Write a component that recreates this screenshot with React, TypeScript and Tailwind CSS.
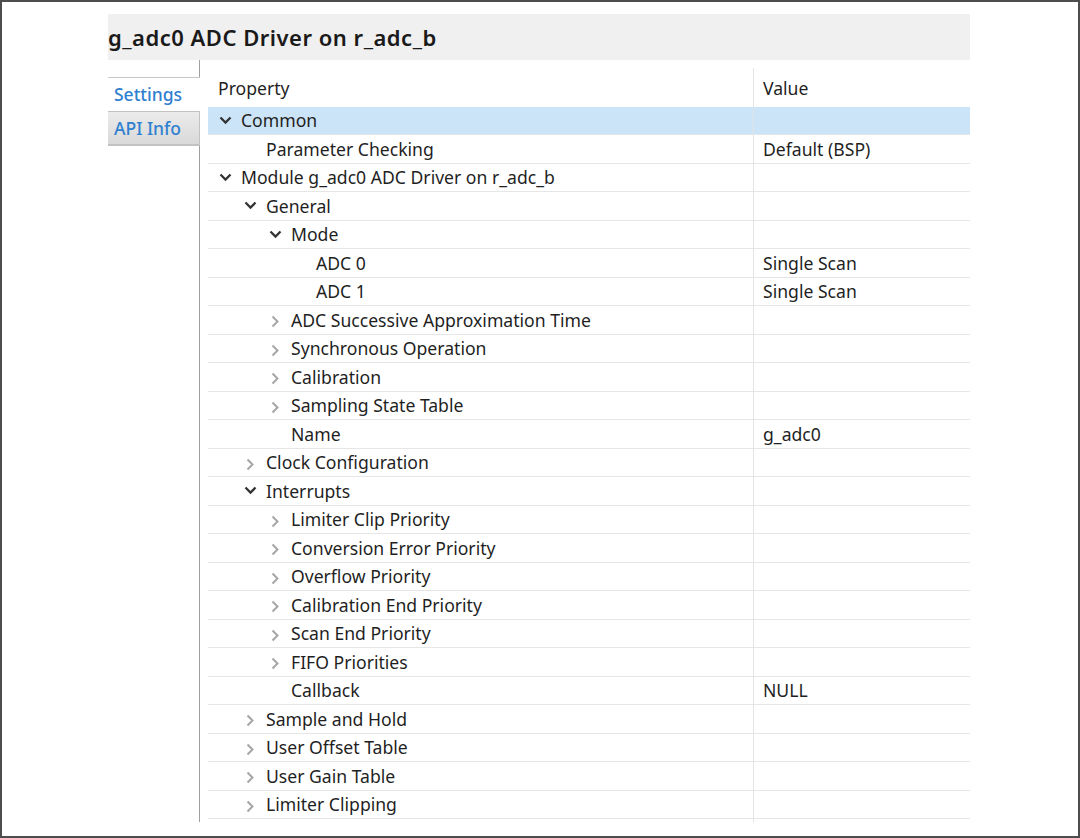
import React from 'react'

type Row = {
  label: string
  level: number
  state?: 'open' | 'closed'
  value?: string
  selected?: boolean
}

const rows: Row[] = [
  { label: 'Common', level: 0, state: 'open', selected: true },
  { label: 'Parameter Checking', level: 1, value: 'Default (BSP)' },
  { label: 'Module g_adc0 ADC Driver on r_adc_b', level: 0, state: 'open' },
  { label: 'General', level: 1, state: 'open' },
  { label: 'Mode', level: 2, state: 'open' },
  { label: 'ADC 0', level: 3, value: 'Single Scan' },
  { label: 'ADC 1', level: 3, value: 'Single Scan' },
  { label: 'ADC Successive Approximation Time', level: 2, state: 'closed' },
  { label: 'Synchronous Operation', level: 2, state: 'closed' },
  { label: 'Calibration', level: 2, state: 'closed' },
  { label: 'Sampling State Table', level: 2, state: 'closed' },
  { label: 'Name', level: 2, value: 'g_adc0' },
  { label: 'Clock Configuration', level: 1, state: 'closed' },
  { label: 'Interrupts', level: 1, state: 'open' },
  { label: 'Limiter Clip Priority', level: 2, state: 'closed' },
  { label: 'Conversion Error Priority', level: 2, state: 'closed' },
  { label: 'Overflow Priority', level: 2, state: 'closed' },
  { label: 'Calibration End Priority', level: 2, state: 'closed' },
  { label: 'Scan End Priority', level: 2, state: 'closed' },
  { label: 'FIFO Priorities', level: 2, state: 'closed' },
  { label: 'Callback', level: 2, value: 'NULL' },
  { label: 'Sample and Hold', level: 1, state: 'closed' },
  { label: 'User Offset Table', level: 1, state: 'closed' },
  { label: 'User Gain Table', level: 1, state: 'closed' },
  { label: 'Limiter Clipping', level: 1, state: 'closed' },
]

const Chevron = ({ state }: { state?: 'open' | 'closed' }) => {
  if (state === 'open') {
    return (
      <svg width="13" height="9" viewBox="0 0 13 9" className="ml-[1px]">
        <path d="M1.5 1.5 L6.5 6.5 L11.5 1.5" fill="none" stroke="#333" strokeWidth="2.3" />
      </svg>
    )
  }
  if (state === 'closed') {
    return (
      <svg width="9" height="13" viewBox="0 0 9 13" className="ml-[3px] mt-[4px]">
        <path d="M1.5 1.5 L6.5 6.5 L1.5 11.5" fill="none" stroke="#a6a6a6" strokeWidth="2" />
      </svg>
    )
  }
  return null
}

const indent = ['pl-[10px]', 'pl-[35px]', 'pl-[60px]', 'pl-[85px]']

export default function App() {
  return (
    <div
      className="w-[1080px] h-[838px] border-2 border-[#4d4d4d] bg-white text-[#1f1f1f] overflow-hidden"
      style={{ fontFamily: '"Noto Sans", "Open Sans", Arial, sans-serif' }}
    >
      <div className="pl-[106px] pt-[12px]">
        <div className="w-[862px] h-[46px] bg-[#f0f0f0] flex items-center">
          <span className="text-[22px] font-semibold text-[#1a1a1a] tracking-[0.5px]">
            g_adc0 ADC Driver on r_adc_b
          </span>
        </div>
        <div className="flex h-[762px]">
          <div className="w-[92px] flex flex-col text-[17.5px] font-medium text-[#2f80d0]">
            <div className="h-[17px] border-r border-[#a0a0a0]" />
            <div className="h-[34px] bg-white border-t border-[#c8c8c8] flex items-center pl-[6px]">
              Settings
            </div>
            <div className="h-[35px] bg-gradient-to-b from-[#ebebeb] to-[#d9d9d9] border-t border-b-2 border-r border-[#c2c2c2] flex items-center pl-[6px]">
              API Info
            </div>
            <div className="flex-1 border-r border-[#a0a0a0]" />
          </div>
          <div className="ml-[8px] w-[762px] pt-[8px] text-[17.6px]">
            <div className="flex h-[38.5px]">
              <div className="w-[545px] pl-[10px] pt-[7px]">Property</div>
              <div className="flex-1 border-l border-[#e3e3e3] pl-[9px] pt-[7px]">Value</div>
            </div>
            {rows.map((r, i) => (
              <div
                key={i}
                className={
                  'flex h-[28.5px] border-b border-[#e6e6e6] ' + (r.selected ? 'bg-[#cce4f7]' : '')
                }
              >
                <div className={'w-[545px] flex items-center ' + indent[r.level]}>
                  <div className="w-[23px] flex items-center">
                    <Chevron state={r.state} />
                  </div>
                  <span className="whitespace-nowrap">{r.label}</span>
                </div>
                <div className="flex-1 border-l border-[#e3e3e3] pl-[9px] flex items-center whitespace-nowrap">
                  {r.value}
                </div>
              </div>
            ))}
            <div className="flex h-[3px]">
              <div className="w-[545px]" />
              <div className="flex-1 border-l border-[#e3e3e3]" />
            </div>
          </div>
        </div>
      </div>
    </div>
  )
}
